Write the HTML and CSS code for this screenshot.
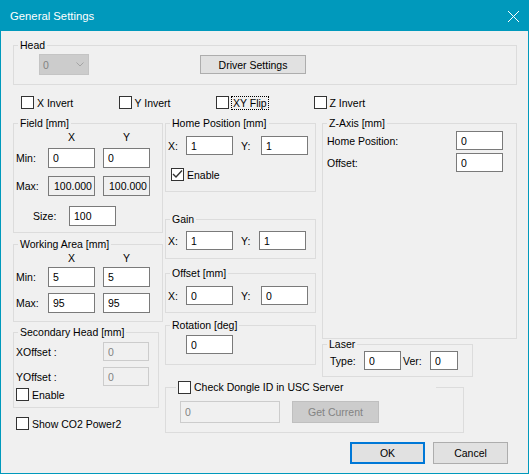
FILE: index.html
```html
<!DOCTYPE html>
<html lang="en">
<head>
  <meta charset="UTF-8" />
  <title>General Settings</title>
  <link rel="stylesheet" href="styles.css">
</head>
<body>
  <div class="window">
    <div class="titlebar">
      <span class="title">General Settings</span>
      <svg class="close" width="11" height="11" viewBox="0 0 11 11"><path d="M0 0 L11 11 M11 0 L0 11" stroke="#fff" stroke-width="1"/></svg>
    </div>

    <div class="dialog">
      <fieldset class="group head">
        <legend>Head</legend>
        <div class="head-row">
          <div class="combo"><span>0</span><svg width="8" height="5" viewBox="0 0 8 5"><path d="M0.5 0.5 L4 4 L7.5 0.5" fill="none" stroke="#a4a4a4"/></svg></div>
          <button class="btn driver">Driver Settings</button>
        </div>
      </fieldset>

      <div class="flags">
        <label class="check"><span class="box"></span>X Invert</label>
        <label class="check"><span class="box"></span>Y Invert</label>
        <label class="check"><span class="box"></span><span class="focus">XY Flip</span></label>
        <label class="check"><span class="box"></span>Z Invert</label>
      </div>

      <div class="main">
        <!-- left column -->
        <div class="col-left">
          <fieldset class="group field">
            <legend>Field [mm]</legend>
            <div class="xy-head"><span class="lbl"></span><span>X</span><span>Y</span></div>
            <div class="pair-row row-min"><span class="lbl">Min:</span><input class="edit" value="0"><input class="edit" value="0"></div>
            <div class="pair-row row-max"><span class="lbl">Max:</span><input class="edit" value="100.000" readonly><input class="edit" value="100.000" readonly></div>
            <div class="size-row"><span class="lbl">Size:</span><input class="edit" value="100"></div>
          </fieldset>

          <fieldset class="group work">
            <legend>Working Area [mm]</legend>
            <div class="xy-head"><span class="lbl"></span><span>X</span><span>Y</span></div>
            <div class="pair-row row-min"><span class="lbl">Min:</span><input class="edit" value="5"><input class="edit" value="5"></div>
            <div class="pair-row row-max"><span class="lbl">Max:</span><input class="edit" value="95"><input class="edit" value="95"></div>
          </fieldset>

          <fieldset class="group second">
            <legend>Secondary Head [mm]</legend>
            <div class="off-row"><span class="lbl">XOffset :</span><input class="edit" value="0" disabled></div>
            <div class="off-row"><span class="lbl">YOffset :</span><input class="edit" value="0" disabled></div>
            <label class="check"><span class="box"></span>Enable</label>
          </fieldset>

          <label class="check co2"><span class="box"></span>Show CO2 Power2</label>
        </div>

        <!-- middle + right -->
        <div class="col-rest">
          <div class="top-row">
            <div class="col-mid">
              <fieldset class="group home">
                <legend>Home Position [mm]</legend>
                <div class="xy-row"><span class="lbl-x">X:</span><input class="edit" value="1"><span class="lbl-y">Y:</span><input class="edit" value="1"></div>
                <label class="check"><span class="box"><svg width="11" height="11" viewBox="0 0 11 11"><path d="M1 5 L4 8 L10 1.5" fill="none" stroke="#333" stroke-width="1.4"/></svg></span>Enable</label>
              </fieldset>

              <fieldset class="group gain">
                <legend>Gain</legend>
                <div class="xy-row"><span class="lbl-x">X:</span><input class="edit" value="1"><span class="lbl-y">Y:</span><input class="edit" value="1"></div>
              </fieldset>

              <fieldset class="group offset">
                <legend>Offset [mm]</legend>
                <div class="xy-row"><span class="lbl-x">X:</span><input class="edit" value="0"><span class="lbl-y">Y:</span><input class="edit" value="0"></div>
              </fieldset>

              <fieldset class="group rotation">
                <legend>Rotation [deg]</legend>
                <div class="rot-row"><input class="edit" value="0"></div>
              </fieldset>
            </div>

            <div class="col-z">
              <fieldset class="group zaxis">
                <legend>Z-Axis [mm]</legend>
                <div class="z-row"><span class="lbl">Home Position:</span><input class="edit" value="0"></div>
                <div class="z-row"><span class="lbl">Offset:</span><input class="edit" value="0"></div>
              </fieldset>

              <fieldset class="group laser">
                <legend>Laser</legend>
                <div class="laser-row">
                  <span class="lbl-type">Type:</span><input class="edit type" value="0">
                  <span class="lbl-ver">Ver:</span><input class="edit ver" value="0">
                </div>
              </fieldset>
            </div>
          </div>

          <fieldset class="group dongle">
            <legend><label class="check"><span class="box"></span>Check Dongle ID in USC Server</label></legend>
            <div class="dongle-row">
              <input class="edit" value="0" disabled>
              <button class="btn" disabled>Get Current</button>
            </div>
          </fieldset>
        </div>
      </div>

      <div class="buttons">
        <button class="btn ok">OK</button>
        <button class="btn cancel">Cancel</button>
      </div>
    </div>
  </div>
</body>
</html>
```

FILE: styles.css
```css
body {
  margin: 0;
  font-family: "Liberation Sans", Arial, sans-serif;
  font-size: 10.5px;
  color: #000;
}
.window {
  width: 529px;
  height: 474px;
  box-sizing: border-box;
  border: 1px solid #0099bc;
  background: #f0f0f0;
}
.titlebar {
  height: 30px;
  background: #0099bc;
  color: #fff;
  display: flex;
  align-items: center;
  justify-content: space-between;
  padding: 0 9px;
}
.title {
  font-size: 11.3px;
}
.dialog {
  padding: 7px 11px 0 12px;
}

/* group boxes */
.group {
  margin: 0;
  padding: 0;
  border: 1px solid #dcdcdc;
  box-sizing: border-box;
  min-width: 0;
}
.group legend {
  margin-left: 4px;
  padding: 0 2px;
  line-height: 14px;
}

/* controls */
.edit {
  box-sizing: border-box;
  width: 47px;
  height: 19px;
  margin: 0;
  padding: 0 0 0 4px;
  border: 1px solid #7a7a7a;
  background: #fff;
  color: #000;
  font: inherit;
  outline: none;
}
.edit[readonly] {
  background: #f0f0f0;
  padding-left: 5px;
}
.edit:disabled {
  background: #f0f0f0;
  border-color: #cccccc;
  color: #838383;
}
.btn {
  box-sizing: border-box;
  margin: 0;
  padding: 0;
  background: #e1e1e1;
  border: 1px solid #adadad;
  color: #000;
  font: inherit;
}
.btn:disabled {
  background: #cccccc;
  border-color: #bfbfbf;
  color: #838383;
}
.check {
  display: flex;
  align-items: center;
  gap: 3px;
  height: 13px;
  white-space: nowrap;
}
.box {
  flex: none;
  display: flex;
  width: 13px;
  height: 13px;
  box-sizing: border-box;
  border: 1px solid #333;
  background: #fff;
}
.combo {
  box-sizing: border-box;
  width: 50px;
  height: 21px;
  display: flex;
  align-items: center;
  justify-content: space-between;
  padding: 0 4px 0 3px;
  border: 1px solid #c4c4c4;
  background: #cccccc;
  color: #838383;
}

/* head */
.head {
  width: 504px;
  height: 47px;
}
.head-row {
  display: flex;
  align-items: center;
  margin-top: 2px;
  padding-left: 25px;
}
.driver {
  width: 106px;
  height: 19px;
  margin-left: 111px;
}

/* flags */
.flags {
  display: flex;
  margin-top: 11px;
  padding-left: 8px;
}
.flags .check {
  width: 97.5px;
}
.focus {
  outline: 1px dotted #000;
  outline-offset: 0;
  padding: 0 1px;
}

/* columns */
.main {
  display: flex;
  margin-top: 7px;
}
.col-left {
  width: 150px;
  margin-right: 2px;
  display: flex;
  flex-direction: column;
}
.col-rest {
  display: flex;
  flex-direction: column;
}
.top-row {
  display: flex;
}
.col-mid {
  width: 151px;
  margin-right: 6px;
  display: flex;
  flex-direction: column;
}
.col-z {
  width: 195px;
  display: flex;
  flex-direction: column;
}

/* field / working area */
.field {
  height: 117px;
}
.work {
  height: 85px;
  margin-top: 4px;
}
.xy-head,
.pair-row {
  display: flex;
  align-items: center;
  gap: 8px;
  padding-left: 2px;
}
.xy-head {
  line-height: 14px;
}
.xy-head span {
  width: 47px;
  text-align: center;
}
.pair-row .lbl,
.xy-head .lbl {
  width: 24px;
}
.pair-row .edit {
  height: 20px;
}
.field .row-min { margin-top: 4px; }
.field .row-max { margin-top: 8px; }
.work .row-min { margin-top: 2px; }
.work .row-max { margin-top: 6px; }
.size-row {
  display: flex;
  align-items: center;
  margin-top: 10px;
  padding-left: 19px;
}
.size-row .lbl {
  width: 36px;
}
.size-row .edit {
  height: 20px;
}

/* secondary head */
.second {
  width: 146px;
  height: 83px;
  margin-top: 3px;
}
.off-row {
  display: flex;
  align-items: center;
  padding-left: 2px;
  margin-top: 6px;
}
.off-row:first-of-type {
  margin-top: 3px;
}
.off-row .lbl {
  width: 87px;
}
.off-row .edit {
  width: 46px;
}
.second .check {
  margin: 2px 0 0 2px;
}
.co2 {
  margin: 9px 0 0 3px;
}

/* middle column */
.home {
  height: 76px;
}
.gain {
  height: 47px;
  margin-top: 20px;
}
.offset {
  height: 47px;
  margin-top: 7px;
}
.rotation {
  height: 47px;
  margin-top: 5px;
}
.xy-row {
  display: flex;
  align-items: center;
  padding-left: 2px;
  margin-top: 6px;
}
.lbl-x {
  width: 18px;
}
.lbl-y {
  width: 20px;
  margin-left: 8px;
}
.gain .xy-row {
  margin-top: 5px;
}
.gain .lbl-y {
  width: 18px;
}
.home .check {
  margin: 13px 0 0 5px;
}
.rot-row {
  display: flex;
  padding-left: 20px;
  margin-top: 3px;
}

/* right column */
.zaxis {
  height: 223px;
}
.z-row {
  display: flex;
  align-items: center;
  padding-left: 4px;
  margin-top: 3px;
}
.z-row:first-of-type {
  margin-top: 1px;
}
.z-row .lbl {
  width: 129px;
}
.laser {
  width: 151px;
  height: 40px;
  margin-top: -2px;
}
.laser-row {
  display: flex;
  align-items: center;
  padding-left: 7px;
}
.lbl-type {
  width: 34px;
}
.edit.type {
  width: 37px;
}
.lbl-ver {
  width: 27px;
  margin-left: 2px;
}
.edit.ver {
  width: 28px;
}

/* dongle */
.dongle {
  width: 299px;
  height: 53px;
  margin-top: 3px;
}
.dongle legend {
  margin-left: 10px;
  width: 256px;
}
.dongle legend .check {
  height: 14px;
}
.dongle-row {
  display: flex;
  align-items: center;
  margin-top: 7px;
  padding-left: 14px;
}
.dongle-row .edit {
  width: 100px;
  height: 22px;
}
.dongle-row .btn {
  width: 87px;
  height: 22px;
  margin-left: 12px;
}

/* bottom buttons */
.buttons {
  display: flex;
  justify-content: flex-end;
  gap: 8px;
  margin: 9px 9px 0 0;
}
.ok,
.cancel {
  width: 75px;
  height: 22px;
}
.ok {
  border: 2px solid #0078d7;
}
```
